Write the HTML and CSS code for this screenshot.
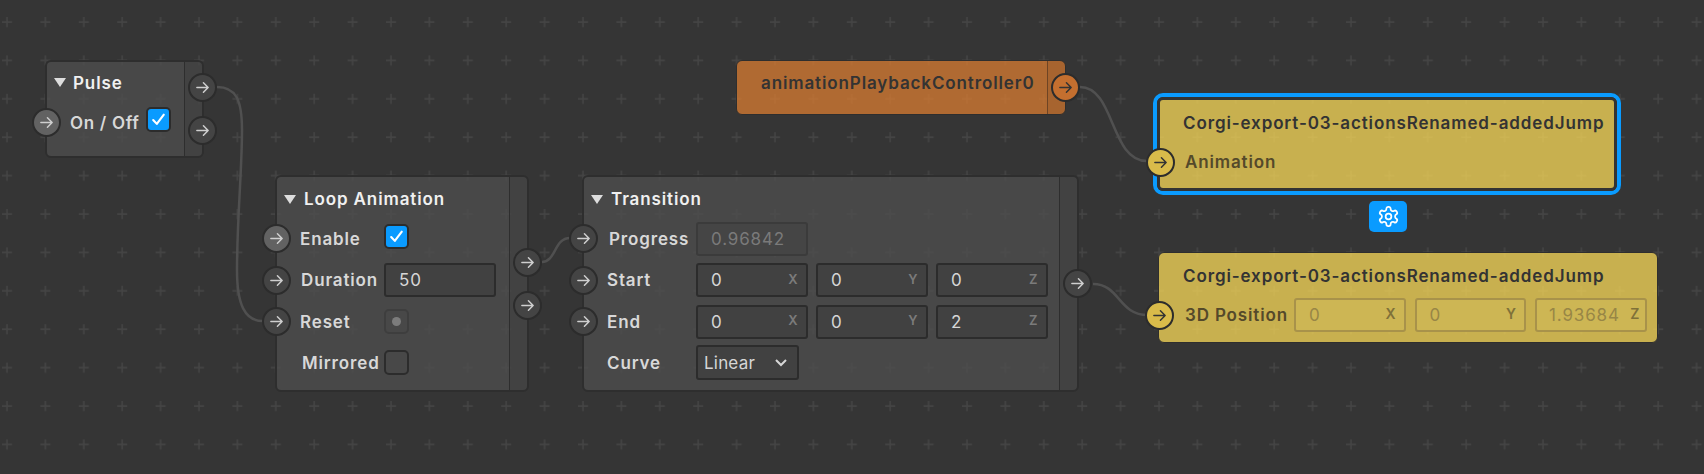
FILE: index.html
```html
<!DOCTYPE html>
<html lang="en">
<head>
  <meta charset="UTF-8" />
  <title>Patch Editor</title>
  <link rel="stylesheet" href="styles.css">
</head>
<body>
<svg class="icons" width="0" height="0">
  <symbol id="arrow" viewBox="0 0 16 16"><path d="M2 8h12M9 3l5 5-5 5" fill="none" stroke="currentColor" stroke-width="1.6" stroke-linecap="round" stroke-linejoin="round"/></symbol>
  <symbol id="check" viewBox="0 0 16 16"><path d="M3 8.5l3.4 3.6L13 3.5" fill="none" stroke="currentColor" stroke-width="2" stroke-linecap="round" stroke-linejoin="round"/></symbol>
</svg>

<main class="canvas">
  <svg class="backdrop" width="1704" height="474">
    <defs>
      <pattern id="plus" x="2" y="17" width="38.4" height="38.4" patternUnits="userSpaceOnUse">
        <path d="M0 5h10M5 0v10" stroke="#444" stroke-width="1.6"/>
      </pattern>
    </defs>
    <rect width="1704" height="474" fill="url(#plus)"/>
    <g class="wires">
      <path d="M217 87C236 87 242 100 242 130C242 170 237 220 237 270C237 305 245 321 263 321"/>
      <path d="M542 262C556 262 554 238 570 238"/>
      <path d="M1093 284C1120 284 1118 315 1148 315"/>
      <path d="M1080 87C1115 87 1110 161 1147 161"/>
    </g>
  </svg>

  <section class="node node-pulse">
    <div class="node-main">
      <div class="title"><i class="tri"></i>Pulse</div>
      <div class="row">
        <span class="port port-lit"><svg><use href="#arrow"/></svg></span>
        <span class="label">On / Off</span>
        <span class="box box-on"><svg><use href="#check"/></svg></span>
      </div>
    </div>
    <div class="rail">
      <span class="port"><svg><use href="#arrow"/></svg></span>
      <span class="port"><svg><use href="#arrow"/></svg></span>
    </div>
  </section>

  <section class="node node-loop">
    <div class="node-main">
      <div class="title"><i class="tri"></i>Loop Animation</div>
      <div class="row">
        <span class="port port-lit"><svg><use href="#arrow"/></svg></span>
        <span class="label nudge-1">Enable</span>
        <span class="box box-on box-up"><svg><use href="#check"/></svg></span>
      </div>
      <div class="row">
        <span class="port"><svg><use href="#arrow"/></svg></span>
        <span class="label nudge-2">Duration</span>
        <div class="field field-wide"><span>50</span></div>
      </div>
      <div class="row">
        <span class="port"><svg><use href="#arrow"/></svg></span>
        <span class="label nudge-1">Reset</span>
        <span class="box box-pulse"><i class="dot"></i></span>
      </div>
      <div class="row">
        <span class="label nudge-3">Mirrored</span>
        <span class="box"></span>
      </div>
    </div>
    <div class="rail">
      <span class="port"><svg><use href="#arrow"/></svg></span>
      <span class="port"><svg><use href="#arrow"/></svg></span>
    </div>
  </section>

  <section class="node node-transition">
    <div class="node-main">
      <div class="title"><i class="tri"></i>Transition</div>
      <div class="row">
        <span class="port"><svg><use href="#arrow"/></svg></span>
        <span class="label nudge-2">Progress</span>
        <div class="field field-off"><span>0.96842</span></div>
      </div>
      <div class="row">
        <span class="port"><svg><use href="#arrow"/></svg></span>
        <span class="label">Start</span>
        <div class="vec">
          <div class="field"><span>0</span><b>X</b></div>
          <div class="field"><span>0</span><b>Y</b></div>
          <div class="field"><span>0</span><b>Z</b></div>
        </div>
      </div>
      <div class="row">
        <span class="port"><svg><use href="#arrow"/></svg></span>
        <span class="label">End</span>
        <div class="vec">
          <div class="field"><span>0</span><b>X</b></div>
          <div class="field"><span>0</span><b>Y</b></div>
          <div class="field"><span>2</span><b>Z</b></div>
        </div>
      </div>
      <div class="row">
        <span class="label">Curve</span>
        <div class="field field-select">
          <span>Linear</span>
          <svg width="14" height="9" viewBox="0 0 14 9"><path d="M2 2l5 5 5-5" fill="none" stroke="currentColor" stroke-width="2"/></svg>
        </div>
      </div>
    </div>
    <div class="rail">
      <span class="port"><svg><use href="#arrow"/></svg></span>
    </div>
  </section>

  <section class="node node-orange">
    <div class="node-main">
      <div class="title">animationPlaybackController0</div>
    </div>
    <div class="rail">
      <span class="port"><svg><use href="#arrow"/></svg></span>
    </div>
  </section>

  <section class="node node-yellow node-anim">
    <div class="node-main">
      <div class="title">Corgi-export-03-actionsRenamed-addedJump</div>
      <div class="row">
        <span class="port"><svg><use href="#arrow"/></svg></span>
        <span class="label">Animation</span>
      </div>
    </div>
  </section>

  <button class="gear" type="button">
    <svg width="23" height="23" viewBox="0 0 24 24" fill="none" stroke="currentColor" stroke-width="1.8" stroke-linejoin="round">
      <path d="M12.22 2h-.44a2 2 0 0 0-2 2v.18a2 2 0 0 1-1 1.73l-.43.25a2 2 0 0 1-2 0l-.15-.08a2 2 0 0 0-2.73.73l-.22.38a2 2 0 0 0 .73 2.73l.15.1a2 2 0 0 1 1 1.72v.51a2 2 0 0 1-1 1.74l-.15.09a2 2 0 0 0-.73 2.73l.22.38a2 2 0 0 0 2.73.73l.15-.08a2 2 0 0 1 2 0l.43.25a2 2 0 0 1 1 1.73V20a2 2 0 0 0 2 2h.44a2 2 0 0 0 2-2v-.18a2 2 0 0 1 1-1.73l.43-.25a2 2 0 0 1 2 0l.15.08a2 2 0 0 0 2.73-.73l.22-.39a2 2 0 0 0-.73-2.73l-.15-.08a2 2 0 0 1-1-1.74v-.5a2 2 0 0 1 1-1.74l.15-.09a2 2 0 0 0 .73-2.73l-.22-.38a2 2 0 0 0-2.73-.73l-.15.08a2 2 0 0 1-2 0l-.43-.25a2 2 0 0 1-1-1.73V4a2 2 0 0 0-2-2z"/>
      <circle cx="12" cy="12" r="3"/>
    </svg>
  </button>

  <section class="node node-yellow node-pos">
    <div class="node-main">
      <div class="title">Corgi-export-03-actionsRenamed-addedJump</div>
      <div class="row">
        <span class="port"><svg><use href="#arrow"/></svg></span>
        <span class="label">3D Position</span>
        <div class="vec">
          <div class="field"><span>0</span><b>X</b></div>
          <div class="field"><span>0</span><b>Y</b></div>
          <div class="field"><span>1.93684</span><b>Z</b></div>
        </div>
      </div>
    </div>
  </section>
</main>
</body>
</html>
```

FILE: styles.css
```css
* { box-sizing: border-box; }
html, body { margin: 0; height: 100%; }
body { background: #353535; font-family: Inter, "Noto Sans", sans-serif; overflow: hidden; }

.icons { position: absolute; }
.canvas { position: relative; width: 1704px; height: 474px; }
.backdrop { position: absolute; left: 0; top: 0; }
.wires path { fill: none; stroke: #505050; stroke-width: 2.5; }

/* nodes sit on a free canvas, so their place is set here */
.node {
  position: absolute;
  display: flex;
  background: rgba(78, 78, 78, .8);
  border: 2px solid #2e2e2e;
  border-radius: 6px;
  color: #dcdcdc;
}
.node-pulse { left: 45px; top: 60px; width: 159px; height: 98px; }
.node-loop { left: 275px; top: 175px; width: 254px; height: 217px; }
.node-transition { left: 582px; top: 175px; width: 497px; height: 217px; }
.node-orange { left: 736px; top: 60px; width: 330px; height: 55px; border-width: 1px; background: rgba(217, 124, 50, .75); color: #333; }
.node-anim { left: 1157px; top: 97px; width: 460px; height: 94px; box-shadow: 0 0 0 4px #0a9bff; border-width: 3px; border-color: #333; }
.node-pos { left: 1158px; top: 252px; width: 500px; height: 91px; border-width: 1px; }
.node-yellow { background: rgba(249, 217, 88, .75); color: #333; }

.node-main { flex: 1; min-width: 0; padding-left: 23px; }
.rail {
  position: relative;
  width: 18px;
  display: flex;
  flex-direction: column;
  justify-content: center;
  gap: 14px;
  padding-left: 3px;
  background: rgba(0, 0, 0, .08);
  border-left: 1px solid #2e2e2e;
  border-radius: 0 4px 4px 0;
}

.title {
  display: flex;
  align-items: center;
  height: 40px;
  font-size: 17px;
  font-weight: 600;
  letter-spacing: .88px;
  color: #f0f0f0;
  white-space: nowrap;
}
.tri {
  width: 0;
  height: 0;
  margin: 0 8px 0 -16px;
  border-left: 6px solid transparent;
  border-right: 6px solid transparent;
  border-top: 9px solid #ddd;
}
.node-pulse .title { padding-top: 1px; }
.node-pulse .tri { margin-right: 7px; }
.node-loop .title, .node-transition .title { padding-top: 3px; height: 41.3px; }
.node-loop .title { padding-left: 1px; }
.node-loop .node-main { padding-left: 22px; }
.node-orange .node-main { padding-left: 24px; }
.node-orange .title { height: 44px; color: #333; }
.node-yellow .title { color: #333; }
.node-anim .title { height: 46px; }
.node-pos .node-main { padding-left: 24px; }
.node-pos .title { height: 45px; }

.row { position: relative; display: flex; align-items: center; height: 41.3px; }
.label { font-size: 17px; font-weight: 600; letter-spacing: .85px; color: #d8d8d8; white-space: nowrap; }
.node-pulse .label { width: 76px; letter-spacing: .7px; }
.node-pulse .row { height: 41px; }
.node-loop .label { width: 85px; }
.node-transition .label { width: 89px; }
.node-yellow .label { color: #54492a; padding-left: 2px; }
.node-anim .row { height: 32px; }
.node-pos .row { height: 34px; }
.node-pos .label { width: 111px; }
.nudge-1 { padding-left: 1px; }
.nudge-2 { padding-left: 2px; }
.nudge-3 { padding-left: 3px; }

.port {
  flex: none;
  width: 29px;
  height: 29px;
  display: flex;
  align-items: center;
  justify-content: center;
  border-radius: 50%;
  background: #444;
  border: 2px solid #2c2c2c;
  color: #cfcfcf;
}
.port svg { width: 15px; height: 15px; }
.port-lit { background: #626262; }
.row .port { position: absolute; top: 50%; margin-top: -14.5px; }
.node-pulse .row .port { left: -38px; }
.node-loop .row .port { left: -37px; }
.node-transition .row .port { left: -38px; }
.node-yellow .row .port { left: -37px; background: #d9bb4a; border-color: #2c2c2c; color: #333; }
.node-pos .row .port { left: -38px; }
.node-orange .port { background: #c46f2f; color: #333; }
.node-orange .rail { background: rgba(0, 0, 0, .05); border-left-color: #6e4424; }

.box {
  flex: none;
  width: 25px;
  height: 25px;
  display: flex;
  align-items: center;
  justify-content: center;
  border: 2px solid #2c2c2c;
  border-radius: 5px;
  background: #484848;
}
.box svg { width: 17px; height: 17px; color: #fff; }
.box-on { background: #0a9bff; }
.box-up { position: relative; top: -2.5px; }
.node-pulse .box { position: relative; top: -3px; }
.box-pulse { background: #484848; border-color: #3e3e3e; }
.dot { width: 9px; height: 9px; border-radius: 50%; background: #7c7c7c; }

.vec { display: flex; gap: 8.5px; }
.field {
  flex: none;
  width: 111.5px;
  height: 34px;
  display: flex;
  align-items: center;
  justify-content: space-between;
  padding: 0 8px 0 13px;
  font-size: 17px;
  letter-spacing: .85px;
  color: #d6d6d6;
  background: #414141;
  border: 2px solid #2c2c2c;
  border-radius: 3px;
}
.field b { margin-top: -3px; font-size: 13px; font-weight: 600; letter-spacing: 0; color: #7b7b7b; }
.field-off { color: #7a7a7a; background: #454545; border-color: #3b3b3b; }
.field-select { width: 103px; height: 35px; padding: 0 9px 0 6px; letter-spacing: .2px; }
.node-pos .vec { gap: 9px; }
.node-pos .field { color: #988646; background: #cdb654; border-color: #a8924a; }
.node-pos .field b { color: #7f7139; font-size: 14px; }
.node-pos .vec .field:last-child { padding-left: 12px; padding-right: 5px; }

.gear {
  position: absolute;
  left: 1369px;
  top: 201px;
  width: 38px;
  height: 31px;
  display: flex;
  align-items: center;
  justify-content: center;
  padding: 0;
  border: 0;
  border-radius: 5px;
  background: #0a9bff;
  color: #fff;
}
```
